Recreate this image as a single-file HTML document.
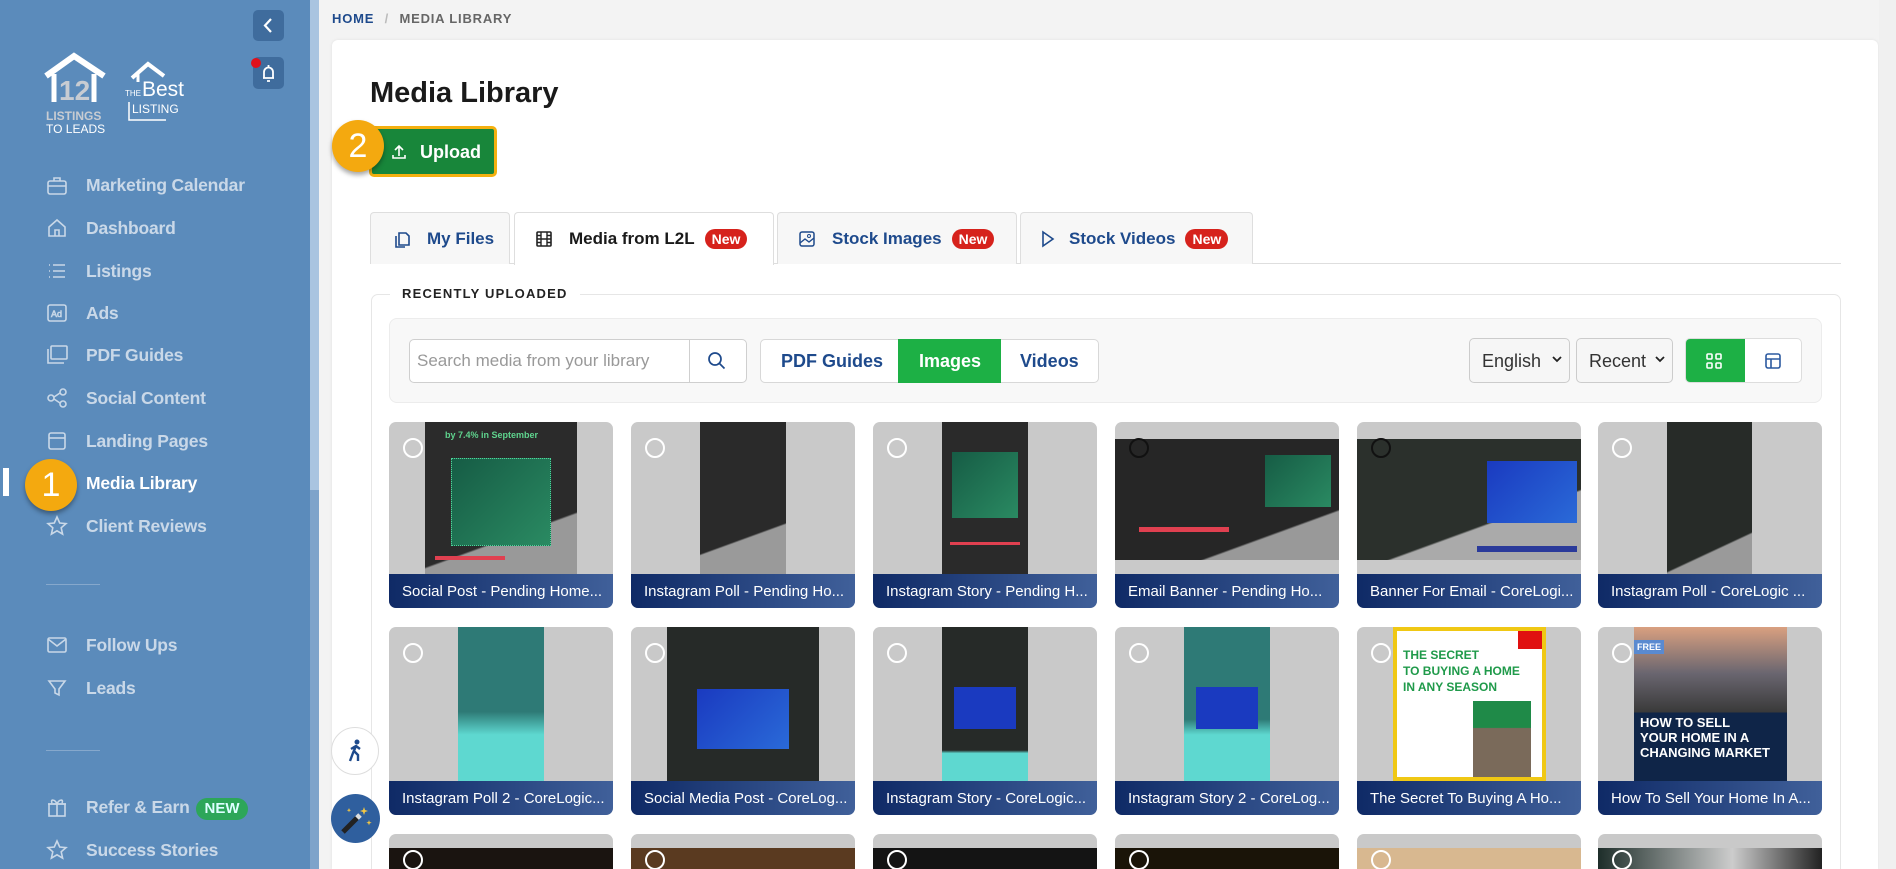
<!DOCTYPE html>
<html><head><meta charset="utf-8">
<style>
*{box-sizing:border-box;margin:0;padding:0}
html,body{width:1896px;height:869px;overflow:hidden}
body{background:#f3f3f3;font-family:"Liberation Sans",sans-serif}
#wrap{position:relative;width:1896px;height:869px;overflow:hidden}
.abs{position:absolute}
#side{left:0;top:0;width:310px;height:869px;background:#5b8bbb}
#sbar{left:310px;top:0;width:9px;height:869px;background:#7ea3ca}
#sbar div{position:absolute;left:0;top:0;width:9px;height:490px;background:#a9c4e0}
.nav{position:absolute;left:86px;font-size:17.5px;font-weight:bold;color:#dde6f0;opacity:.85;letter-spacing:-.2px}
.ni{position:absolute;left:46px;width:22px;height:22px}
.ni svg{width:22px;height:22px;fill:none;stroke:#dde6f0;stroke-width:1.6;opacity:.85}
.hr{position:absolute;left:46px;width:54px;height:1px;background:#86a8cc}
.badge{position:absolute;border-radius:50%;background:#f4a90f;color:#fff;font-size:34px;text-align:center;box-shadow:0 3px 5px rgba(0,0,0,.35)}
#card{left:332px;top:40px;width:1546px;height:829px;background:#fff;border-radius:6px 6px 0 0;box-shadow:0 0 3px rgba(0,0,0,.08)}
.tab{position:absolute;top:212px;height:52px;border:1px solid #dedede;border-bottom:none;border-radius:4px 4px 0 0;background:#f7f7f7;font-size:17px;font-weight:bold;color:#1e4a8c;display:flex;align-items:center;padding-left:22px;gap:10px}
.new{background:#d6221c;color:#fff;font-size:14px;border-radius:10px;padding:2px 7px;font-weight:bold}
.tc{position:absolute;width:224px;border-radius:7px;background:#c9c9c9;overflow:hidden}
.cap{position:absolute;left:0;right:0;bottom:0;height:34px;background:linear-gradient(90deg,#0f2a66,#40609a);color:#fff;font-size:15px;padding:9px 0 0 13px;white-space:nowrap}
.rad{position:absolute;left:14px;top:16px;width:20px;height:20px;border:2px solid #fff;border-radius:50%}
.img{position:absolute}
</style></head><body><div id="wrap">

<div id="side" class="abs"></div>
<div id="sbar" class="abs"><div></div></div>

<svg class="abs" style="left:42px;top:52px" width="70" height="85" viewBox="0 0 70 85">
<path d="M4 24 L32 4 L62 24" stroke="#fff" stroke-width="6" fill="none"/>
<path d="M12 22 V50 M52 22 V50" stroke="#fff" stroke-width="5"/>
<text x="17" y="48" font-size="28" font-weight="bold" fill="#c8ccd2" font-family="Liberation Sans">12</text>
<text x="4" y="68" font-size="12" fill="#c8ccd2" font-family="Liberation Sans" font-weight="bold">LISTINGS</text>
<text x="4" y="81" font-size="12" fill="#fff" font-family="Liberation Sans">TO LEADS</text>
</svg>
<svg class="abs" style="left:124px;top:58px" width="70" height="66" viewBox="0 0 70 66">
<path d="M8 20 L24 6 L40 18" stroke="#fff" stroke-width="4" fill="none"/>
<path d="M14 16 V24" stroke="#fff" stroke-width="3"/>
<text x="1" y="38" font-size="8" fill="#fff" font-family="Liberation Sans">THE</text>
<text x="18" y="38" font-size="21" fill="#fff" font-family="Liberation Sans">Best</text>
<text x="8" y="55" font-size="12" fill="#fff" font-family="Liberation Sans">LISTING</text>
<path d="M5 44 V62 H42" stroke="#fff" stroke-width="1.5" fill="none"/>
</svg>

<div class="abs" style="left:253px;top:10px;width:31px;height:31px;background:#3f6c9d;border-radius:5px"></div>
<svg class="abs" style="left:253px;top:10px" width="31" height="31"><path d="M18 9 L12 15.5 L18 22" stroke="#fff" stroke-width="2.2" fill="none"/></svg>
<div class="abs" style="left:253px;top:57px;width:31px;height:32px;background:#3f6c9d;border-radius:5px"></div>
<svg class="abs" style="left:253px;top:57px" width="31" height="32"><path d="M10 21 H21 M11 21 V15 a4.5 4.5 0 0 1 9 0 V21 M14 24 h3 M15.5 8 v2" stroke="#fff" stroke-width="1.8" fill="none"/></svg>
<div class="abs" style="left:251px;top:58px;width:10px;height:10px;background:#e0101c;border-radius:50%"></div>

<div class="ni" style="top:175px"><svg viewBox="0 0 22 22"><rect x="2" y="6" width="18" height="13" rx="2"/><path d="M8 6V3h6v3M2 11h18"/></svg></div>
<div class="nav" style="top:175px">Marketing Calendar</div>
<div class="ni" style="top:217px"><svg viewBox="0 0 22 22"><path d="M3 10 L11 3 L19 10 V19 H3Z M9 19v-6h4v6"/></svg></div>
<div class="nav" style="top:218px">Dashboard</div>
<div class="ni" style="top:260px"><svg viewBox="0 0 22 22"><path d="M7 5h12M7 11h12M7 17h12M3 5h1M3 11h1M3 17h1"/></svg></div>
<div class="nav" style="top:261px">Listings</div>
<div class="ni" style="top:302px"><svg viewBox="0 0 22 22"><rect x="2" y="3" width="18" height="16" rx="2"/><text x="5" y="15" font-size="9" stroke-width=".6" fill="#dde6f0">Ad</text></svg></div>
<div class="nav" style="top:303px">Ads</div>
<div class="ni" style="top:344px"><svg viewBox="0 0 22 22"><rect x="5" y="2" width="16" height="13" rx="1"/><path d="M2 5v14h16"/></svg></div>
<div class="nav" style="top:345px">PDF Guides</div>
<div class="ni" style="top:387px"><svg viewBox="0 0 22 22"><circle cx="5" cy="11" r="3"/><circle cx="17" cy="5" r="3"/><circle cx="17" cy="17" r="3"/><path d="M8 10l6-4M8 12l6 4"/></svg></div>
<div class="nav" style="top:388px">Social Content</div>
<div class="ni" style="top:430px"><svg viewBox="0 0 22 22"><rect x="3" y="3" width="16" height="16" rx="2"/><path d="M3 8h16"/></svg></div>
<div class="nav" style="top:431px">Landing Pages</div>
<div class="abs" style="left:3px;top:468px;width:6px;height:28px;background:#fff"></div>
<div class="nav" style="top:473px;color:#fff;opacity:1">Media Library</div>
<div class="badge" style="left:25px;top:459px;width:52px;height:52px;line-height:52px">1</div>
<div class="ni" style="top:515px"><svg viewBox="0 0 22 22"><path d="M11 2l2.7 6 6.3.6-4.8 4.2 1.4 6.3L11 15.8 5.4 19.1l1.4-6.3L2 8.6 8.3 8z"/></svg></div>
<div class="nav" style="top:516px">Client Reviews</div>
<div class="hr" style="top:584px"></div>
<div class="ni" style="top:634px"><svg viewBox="0 0 22 22"><rect x="2" y="4" width="18" height="14" rx="1.5"/><path d="M2 5l9 7 9-7"/></svg></div>
<div class="nav" style="top:635px">Follow Ups</div>
<div class="ni" style="top:677px"><svg viewBox="0 0 22 22"><path d="M3 4h16l-6 8v6l-4-2v-4z"/></svg></div>
<div class="nav" style="top:678px">Leads</div>
<div class="hr" style="top:750px"></div>
<div class="ni" style="top:796px"><svg viewBox="0 0 22 22"><rect x="3" y="8" width="16" height="12"/><path d="M2 8h18M11 8v12M11 8c-2-5-7-5-5-1M11 8c2-5 7-5 5-1"/></svg></div>
<div class="nav" style="top:797px">Refer &amp; Earn</div>
<div class="abs" style="left:196px;top:798px;width:52px;height:22px;background:#2da659;border-radius:11px;color:#dff;font-size:15px;font-weight:bold;text-align:center;line-height:22px">NEW</div>
<div class="ni" style="top:839px"><svg viewBox="0 0 22 22"><path d="M11 2l2.7 6 6.3.6-4.8 4.2 1.4 6.3L11 15.8 5.4 19.1l1.4-6.3L2 8.6 8.3 8z"/></svg></div>
<div class="nav" style="top:840px">Success Stories</div>

<div class="abs" style="left:332px;top:11px;font-size:13px;font-weight:bold;letter-spacing:.8px;color:#1e4a8c">HOME <span style="color:#bbb;margin:0 6px">/</span> <span style="color:#666">MEDIA LIBRARY</span></div>
<div id="card" class="abs"></div>
<div class="abs" style="left:370px;top:77px;font-size:29px;font-weight:bold;color:#1a1a1a">Media Library</div>
<div class="abs" style="left:369px;top:126px;width:128px;height:51px;background:#18863a;border:3px solid #f4b00f;border-radius:5px;color:#fff;font-size:18px;font-weight:bold;padding:13px 0 0 48px">Upload</div>
<svg class="abs" style="left:390px;top:143px" width="18" height="18"><path d="M9 13V3M5 7l4-4 4 4M3 12v3h12v-3" stroke="#fff" stroke-width="1.6" fill="none"/></svg>
<div class="badge" style="left:332px;top:120px;width:52px;height:52px;line-height:52px">2</div>

<div class="abs" style="left:370px;top:263px;width:1471px;height:1px;background:#dedede"></div>
<div class="tab" style="left:370px;width:140px;padding-left:22px"><svg width="18" height="20"><path d="M6 4h7l3 3v9H6z M3 7v11h9" stroke="#1e4a8c" stroke-width="1.6" fill="none"/></svg><span style="margin-left:6px">My Files</span></div>
<div class="tab" style="left:514px;width:260px;height:53px;background:#fff;color:#1a1a1a;padding-left:20px"><svg width="18" height="18"><rect x="2" y="2" width="14" height="14" rx="1" stroke="#222" stroke-width="1.6" fill="none"/><path d="M6 2v14M12 2v14M2 9h14M2 5.5h4M2 12.5h4M12 5.5h4M12 12.5h4" stroke="#222" stroke-width="1.4"/></svg><span style="margin-left:6px">Media from L2L</span><span class="new">New</span></div>
<div class="tab" style="left:777px;width:240px;padding-left:20px"><svg width="18" height="18"><rect x="2" y="2" width="14" height="14" rx="2" stroke="#1e4a8c" stroke-width="1.5" fill="none"/><path d="M2 13l5-4 4 3 5-4" stroke="#1e4a8c" stroke-width="1.4" fill="none"/><circle cx="11" cy="6" r="1.5" stroke="#1e4a8c" fill="none"/></svg><span style="margin-left:6px">Stock Images</span><span class="new">New</span></div>
<div class="tab" style="left:1020px;width:233px;padding-left:20px"><svg width="14" height="18"><path d="M2 2l10 7-10 7z" stroke="#1e4a8c" stroke-width="1.6" fill="none"/></svg><span style="margin-left:4px">Stock Videos</span><span class="new">New</span></div>

<div class="abs" style="left:371px;top:294px;width:1470px;height:600px;border:1px solid #e6e6e6;border-radius:7px"></div>
<div class="abs" style="left:390px;top:285px;background:#fff;padding:0 12px;font-size:13px;font-weight:bold;letter-spacing:1.2px;color:#222;line-height:18px">RECENTLY UPLOADED</div>

<div class="abs" style="left:389px;top:318px;width:1433px;height:85px;background:#f8f8f8;border:1px solid #ececec;border-radius:8px"></div>
<div class="abs" style="left:409px;top:339px;width:338px;height:44px;background:#fff;border:1px solid #cfcfcf;border-radius:5px"></div>
<div class="abs" style="left:689px;top:339px;width:1px;height:44px;background:#cfcfcf"></div>
<div class="abs" style="left:417px;top:351px;font-size:17px;color:#999">Search media from your library</div>
<svg class="abs" style="left:707px;top:351px" width="20" height="20"><circle cx="8" cy="8" r="6" stroke="#1e4a8c" stroke-width="1.7" fill="none"/><path d="M12.5 12.5l5 5" stroke="#1e4a8c" stroke-width="1.7"/></svg>

<div class="abs" style="left:760px;top:339px;width:339px;height:44px;background:#fff;border:1px solid #d8d8d8;border-radius:5px"></div>
<div class="abs" style="left:898px;top:339px;width:103px;height:44px;background:#1db045"></div>
<div class="abs" style="left:781px;top:351px;font-size:18px;font-weight:bold;color:#1e4a8c">PDF Guides</div>
<div class="abs" style="left:919px;top:351px;font-size:18px;font-weight:bold;color:#fff">Images</div>
<div class="abs" style="left:1020px;top:351px;font-size:18px;font-weight:bold;color:#1e4a8c">Videos</div>

<div class="abs" style="left:1469px;top:338px;width:101px;height:45px;background:#f6f6f6;border:1px solid #ccc;border-radius:5px;font-size:18px;color:#333;padding:12px 0 0 12px">English</div>
<svg class="abs" style="left:1551px;top:355px" width="12" height="10"><path d="M2 2l4 4 4-4" stroke="#222" stroke-width="1.8" fill="none"/></svg>
<div class="abs" style="left:1576px;top:338px;width:97px;height:45px;background:#f6f6f6;border:1px solid #ccc;border-radius:5px;font-size:18px;color:#333;padding:12px 0 0 12px">Recent</div>
<svg class="abs" style="left:1654px;top:355px" width="12" height="10"><path d="M2 2l4 4 4-4" stroke="#222" stroke-width="1.8" fill="none"/></svg>
<div class="abs" style="left:1685px;top:338px;width:117px;height:45px;background:#fff;border:1px solid #ddd;border-radius:5px;overflow:hidden"><div style="width:59px;height:45px;background:#1db045"></div></div>
<svg class="abs" style="left:1705px;top:352px" width="18" height="18"><g stroke="#fff" stroke-width="1.6" fill="none"><rect x="2" y="2" width="5" height="5" rx="1"/><rect x="11" y="2" width="5" height="5" rx="1"/><rect x="2" y="11" width="5" height="5" rx="1"/><rect x="11" y="11" width="5" height="5" rx="1"/></g></svg>
<svg class="abs" style="left:1764px;top:352px" width="18" height="18"><g stroke="#2c5aa0" stroke-width="1.6" fill="none"><rect x="2" y="2" width="14" height="14" rx="2"/><path d="M2 7h14M7 7v9"/></g></svg>

<div class="tc" style="left:389px;top:422px;height:186px"><div class="img" style="left:36px;top:0;width:152px;height:152px;background:linear-gradient(160deg,#2b2b2b 70%,#999 71%)"><div style="position:absolute;left:26px;top:36px;width:100px;height:88px;background:linear-gradient(135deg,#165c45,#2a8a62);border:1px dotted #4fd39a"></div><div style="position:absolute;left:20px;top:8px;color:#5fd48e;font-size:9px;font-weight:bold">by 7.4% in September</div><div style="position:absolute;left:10px;top:134px;width:70px;height:4px;background:#e04050"></div></div><div class="rad"></div><div class="cap">Social Post - Pending Home...</div></div>
<div class="tc" style="left:631px;top:422px;height:186px"><div class="img" style="left:69px;top:0;width:86px;height:152px;background:linear-gradient(160deg,#2a2a2a 72%,#9a9a9a 73%)"></div><div class="rad"></div><div class="cap">Instagram Poll - Pending Ho...</div></div>
<div class="tc" style="left:873px;top:422px;height:186px"><div class="img" style="left:69px;top:0;width:86px;height:152px;background:#2a2a2a"><div style="position:absolute;left:10px;top:30px;width:66px;height:66px;background:linear-gradient(135deg,#165c45,#2a8a62)"></div><div style="position:absolute;left:8px;top:120px;width:70px;height:3px;background:#e04050"></div></div><div class="rad"></div><div class="cap">Instagram Story - Pending H...</div></div>
<div class="tc" style="left:1115px;top:422px;height:186px"><div class="img" style="left:0;top:17px;width:224px;height:121px;background:linear-gradient(160deg,#262626 75%,#999 76%)"><div style="position:absolute;left:150px;top:16px;width:66px;height:52px;background:linear-gradient(135deg,#165c45,#2a8a62)"></div><div style="position:absolute;left:24px;top:88px;width:90px;height:5px;background:#e04050"></div></div><div class="rad" style="border-color:#111"></div><div class="cap">Email Banner - Pending Ho...</div></div>
<div class="tc" style="left:1357px;top:422px;height:186px"><div class="img" style="left:0;top:17px;width:224px;height:121px;background:linear-gradient(160deg,#2b302c 65%,#aaa 66%)"><div style="position:absolute;left:130px;top:22px;width:90px;height:62px;background:linear-gradient(135deg,#1a3ac0,#2a6ad8)"></div><div style="position:absolute;left:120px;top:107px;width:100px;height:6px;background:#2a3a9a"></div></div><div class="rad" style="border-color:#111"></div><div class="cap">Banner For Email - CoreLogi...</div></div>
<div class="tc" style="left:1598px;top:422px;height:186px"><div class="img" style="left:69px;top:0;width:85px;height:152px;background:linear-gradient(155deg,#272b28 78%,#9a9a9a 79%)"></div><div class="rad"></div><div class="cap">Instagram Poll - CoreLogic ...</div></div>

<div class="tc" style="left:389px;top:627px;height:188px"><div class="img" style="left:69px;top:0;width:86px;height:154px;background:linear-gradient(180deg,#2e7a76 55%,#5ed8d0 70%)"></div><div class="rad"></div><div class="cap">Instagram Poll 2 - CoreLogic...</div></div>
<div class="tc" style="left:631px;top:627px;height:188px"><div class="img" style="left:36px;top:0;width:152px;height:154px;background:#262a28"><div style="position:absolute;left:30px;top:62px;width:92px;height:60px;background:linear-gradient(135deg,#1a3ac0,#2a6ad8)"></div></div><div class="rad"></div><div class="cap">Social Media Post - CoreLog...</div></div>
<div class="tc" style="left:873px;top:627px;height:188px"><div class="img" style="left:69px;top:0;width:86px;height:154px;background:linear-gradient(180deg,#262a28 80%,#5ed8d0 82%)"><div style="position:absolute;left:12px;top:60px;width:62px;height:42px;background:#1a3ac0"></div></div><div class="rad"></div><div class="cap">Instagram Story - CoreLogic...</div></div>
<div class="tc" style="left:1115px;top:627px;height:188px"><div class="img" style="left:69px;top:0;width:86px;height:154px;background:linear-gradient(180deg,#2e7a76 60%,#5ed8d0 70%)"><div style="position:absolute;left:12px;top:60px;width:62px;height:42px;background:#1a3ac0"></div></div><div class="rad"></div><div class="cap">Instagram Story 2 - CoreLog...</div></div>
<div class="tc" style="left:1357px;top:627px;height:188px"><div class="img" style="left:36px;top:0;width:153px;height:154px;background:#fff;border:4px solid #f0c814"><div style="position:absolute;left:6px;top:16px;font-size:12px;font-weight:bold;color:#1f9a4a;line-height:16px">THE SECRET<br>TO BUYING A HOME<br>IN ANY SEASON</div><div style="position:absolute;right:0;top:0;width:24px;height:18px;background:#e01010"></div><div style="position:absolute;left:76px;top:70px;width:58px;height:76px;background:linear-gradient(180deg,#1f8a48 35%,#7a6a5a 36%)"></div></div><div class="rad"></div><div class="cap">The Secret To Buying A Ho...</div></div>
<div class="tc" style="left:1598px;top:627px;height:188px"><div class="img" style="left:36px;top:0;width:153px;height:154px;background:linear-gradient(180deg,#d9a080 0%,#6a6670 30%,#3a3a3a 55%,#0f2548 56%)"><div style="position:absolute;left:6px;top:88px;font-size:13px;font-weight:bold;color:#fff;line-height:15px">HOW TO SELL<br>YOUR HOME IN A<br>CHANGING MARKET</div><div style="position:absolute;left:0;top:13px;width:30px;height:14px;background:#5a8ad0;color:#fff;font-size:9px;font-weight:bold;padding:2px 3px">FREE</div></div><div class="rad"></div><div class="cap">How To Sell Your Home In A...</div></div>

<div class="tc" style="left:389px;top:834px;height:60px"><div class="img" style="left:0;top:14px;width:224px;height:50px;background:#1a1410"></div><div class="rad"></div></div>
<div class="tc" style="left:631px;top:834px;height:60px"><div class="img" style="left:0;top:14px;width:224px;height:50px;background:#5a3a20"></div><div class="rad"></div></div>
<div class="tc" style="left:873px;top:834px;height:60px"><div class="img" style="left:0;top:14px;width:224px;height:50px;background:#141414"></div><div class="rad"></div></div>
<div class="tc" style="left:1115px;top:834px;height:60px"><div class="img" style="left:0;top:14px;width:224px;height:50px;background:#1a1408"></div><div class="rad"></div></div>
<div class="tc" style="left:1357px;top:834px;height:60px"><div class="img" style="left:0;top:14px;width:224px;height:50px;background:#d8b890"></div><div class="rad"></div></div>
<div class="tc" style="left:1598px;top:834px;height:60px"><div class="img" style="left:0;top:14px;width:224px;height:50px;background:linear-gradient(90deg,#1e2e2a,#ccc 60%,#222)"></div><div class="rad"></div></div>

<div class="abs" style="left:331px;top:727px;width:48px;height:48px;border-radius:50%;background:#fff;border:1px solid #ddd"></div>
<svg class="abs" style="left:341px;top:737px" width="28" height="28"><circle cx="16" cy="5" r="2.5" fill="#1e4a8c"/><path d="M15 9l-3 7-3 8M13 14l4 4v6M10 12l5-3 4 3" stroke="#1e4a8c" stroke-width="2.4" fill="none"/></svg>
<div class="abs" style="left:331px;top:794px;width:49px;height:49px;border-radius:50%;background:#2f5f9e"></div>
<svg class="abs" style="left:331px;top:794px" width="49" height="49"><path d="M12 38l14-14" stroke="#222" stroke-width="5"/><path d="M26 24l3-3" stroke="#ddd" stroke-width="5"/><path d="M33 13l1 3 3 1-3 1-1 3-1-3-3-1 3-1z M38 26l.7 2 2 .7-2 .7-.7 2-.7-2-2-.7 2-.7z M18 14l.6 1.6 1.6.6-1.6.6-.6 1.6-.6-1.6-1.6-.6 1.6-.6z" fill="#f5c842"/></svg>

<div class="abs" style="left:1879px;top:0;width:17px;height:869px;background:#f0f0f0"></div>
</div></body></html>
